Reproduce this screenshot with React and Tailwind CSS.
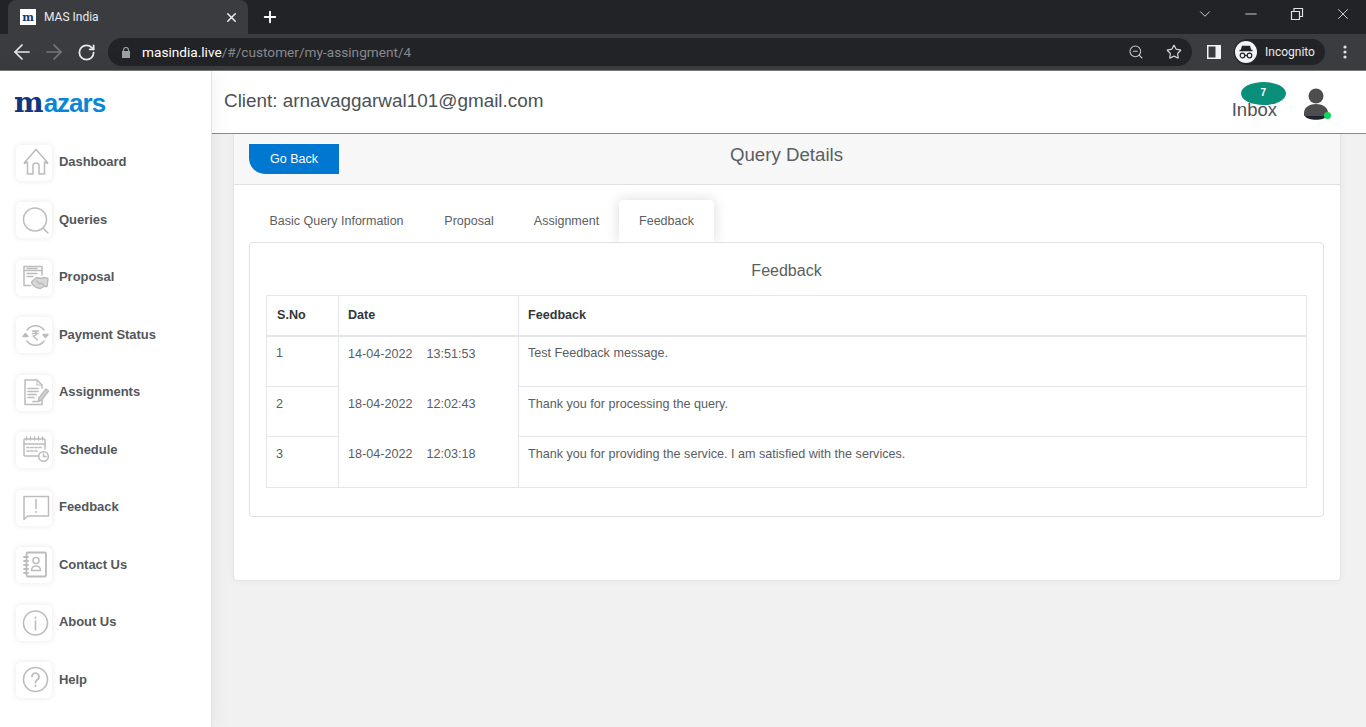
import React from 'react';
import { ArrowLeft, ArrowRight, RotateCw, Star, ZoomOut, X, Plus, ChevronDown, Minus } from 'lucide-react';

const Line = ({ children }) => (
  <svg width="36" height="36" viewBox="0 0 36 36" fill="none" stroke="#bcbcbc" strokeWidth="1.500" strokeLinecap="round" strokeLinejoin="round">
    {children}
  </svg>
);

const navItems = [
  {
    label: 'Dashboard',
    icon: (
      <Line>
        <path d="M8.500 17.500v1l3-1.500v12h5.500v-8a3 3 0 0 1 6 0v8h5.500V17l3 1.500v-1L20 4.500z" />
      </Line>
    ),
  },
  {
    label: 'Queries',
    icon: (
      <Line>
        <circle cx="19" cy="17.500" r="11.500" />
        <path d="M27 26l5 5" />
      </Line>
    ),
  },
  {
    label: 'Proposal',
    icon: (
      <Line>
        <path d="M26 15V6.500H8v19h6.500" />
        <path d="M8 10.500h18" />
        <path d="M11 8.500h10M11 13.500h10M11 16.500h6" />
        <path d="M15.500 22l5-4.500 4.500 1 3-1 4 1-1 8h-3.500l-3 2-4-1-4-3z" fill="#d8d8d8" />
        <path d="M20.500 21l3 3 2-1 3 3" />
      </Line>
    ),
  },
  {
    label: 'Payment Status',
    icon: (
      <Line>
        <path d="M11 13a10.500 10.500 0 0 1 17 0M28 24a10.500 10.500 0 0 1-17 0" />
        <path d="M7 19.500h5l-2.500-3zM27 17.500h5l-2.500 3z" fill="#bcbcbc" />
        <path d="M16.500 14h6M16.500 16.500h6M17 14c4.500 0 4.500 5 0 5l4.500 4" strokeWidth="1.300" />
      </Line>
    ),
  },
  {
    label: 'Assignments',
    icon: (
      <Line>
        <path d="M26 13v-3l-5-5H9v24.500h17V24" />
        <path d="M21 5v5h5" strokeWidth="1.100" />
        <path d="M12 13.500h10M12 16.500h10M12 19.500h8M12 22.500h6M17 26.500h5" strokeWidth="1.700" />
        <path d="M23 23l7-9 2.500 2-7 9-3 1.500z" fill="#d4d4d4" />
      </Line>
    ),
  },
  {
    label: 'Schedule',
    labelClass: 'pl-px',
    icon: (
      <Line>
        <path d="M25 24H9a1 1 0 0 1-1-1V8a1 1 0 0 1 1-1h19a1 1 0 0 1 1 1v9" />
        <path d="M8 12h21M10.500 5v3M14.500 5v3M18.500 5v3M22.500 5v3M26.500 5v3" />
        <path d="M11 15.500h2M15 15.500h2M19 15.500h2M23 15.500h2M11 19h2M15 19h2M19 19h2" strokeWidth="1.700" />
        <circle cx="27.500" cy="24.500" r="4.800" fill="#fff" />
        <path d="M27.500 22v2.500H30" />
      </Line>
    ),
  },
  {
    label: 'Feedback',
    icon: (
      <Line>
        <path d="M8 6.500h24.500V26H11.500L8 29.500z" />
        <path d="M20 9.500v9M20 21.500v1" />
      </Line>
    ),
  },
  {
    label: 'Contact Us',
    icon: (
      <Line>
        <path d="M12 5.500h16.500a1.500 1.500 0 0 1 1.500 1.500v21a1.500 1.500 0 0 1-1.500 1.500H12a1.500 1.500 0 0 1-1.500-1.500V7A1.500 1.500 0 0 1 12 5.500z" strokeWidth="1.800" />
        <path d="M8 10h4M8 14h4M8 18h4M8 22h4M8 26h4" strokeWidth="1.800" />
        <circle cx="20" cy="13.500" r="3" />
        <path d="M15.500 23.500c0-6 9-6 9 0z" />
      </Line>
    ),
  },
  {
    label: 'About Us',
    icon: (
      <Line>
        <circle cx="19.500" cy="18" r="12" strokeWidth="1.600" />
        <path d="M19.500 16v9M19.500 12v1.500" />
      </Line>
    ),
  },
  {
    label: 'Help',
    icon: (
      <Line>
        <circle cx="19.500" cy="17.500" r="12" strokeWidth="1.600" />
        <path d="M16 14.500a3.500 3.500 0 1 1 5.500 3c-1.500 1-2 1.500-2 3" strokeWidth="1.800" />
        <path d="M19.500 23.500v.5" strokeWidth="1.800" />
      </Line>
    ),
  },
];

const feedbackRows = [
  { no: 1, date: '14-04-2022', time: '13:51:53', text: 'Test Feedback message.', h: 'h-[51px]' },
  { no: 2, date: '18-04-2022', time: '12:02:43', text: 'Thank you for processing the query.', h: 'h-[50px]' },
  { no: 3, date: '18-04-2022', time: '12:03:18', text: 'Thank you for providing the service. I am satisfied with the services.', h: 'h-[51px]' },
];

const tabs = [
  { label: 'Basic Query Information', w: 'w-[175px]' },
  { label: 'Proposal', w: 'w-[90px]' },
  { label: 'Assignment', w: 'w-[105px]' },
];

function BrowserBar() {
  return (
    <div className="h-[71px] shrink-0 border-b border-[#77787a] bg-[#3b3c3f] font-['Roboto',sans-serif] text-white">
      <div className="flex h-[34px] items-end bg-[#222327]">
        <div className="ml-2 flex h-[34px] w-[240px] items-center rounded-t-lg bg-[#3b3c3f] pl-3 pr-[9px]">
          <span className="flex h-4 w-4 items-center justify-center bg-white font-['DejaVu_Serif',serif] text-[11px] font-bold leading-none text-[#12357f]">m</span>
          <span className="ml-2 flex-1 text-[12px] text-[#e8eaed]">MAS India</span>
          <X size={15} strokeWidth={2.500} className="text-[#e8eaed]" />
        </div>
        <Plus size={18} strokeWidth={2.500} className="ml-[13px] mb-2" />
        <div className="flex-1" />
        <div className="mb-[8px] flex items-center pr-[14px] text-[#dfe1e5]">
          <ChevronDown size={18} strokeWidth={1.200} className="mb-[3px]" />
          <Minus size={18} strokeWidth={1.200} className="mb-[3px] ml-[28px]" />
          <svg width="14" height="14" viewBox="0 0 14 14" fill="none" stroke="currentColor" strokeWidth="1.200" className="mb-[3px] ml-[30px]">
            <path d="M1.500 4.500h8v8h-8zM4 4.500V1.500h8.500v8H9.500" />
          </svg>
          <X size={18} strokeWidth={1.200} className="mb-[3px] ml-[30px]" />
        </div>
      </div>
      <div className="flex h-9 items-center">
        <ArrowLeft size={24} strokeWidth={1.700} className="ml-[10px] text-[#e8eaed]" />
        <ArrowRight size={24} strokeWidth={1.700} className="ml-2 text-[#75777a]" />
        <RotateCw size={19} strokeWidth={2.200} className="ml-[11px] text-[#e8eaed]" />
        <div className="ml-3 flex h-7 w-[1084px] items-center rounded-full bg-[#222327] pl-[14px] pr-[10px]">
          <svg width="8" height="11" viewBox="0 0 8 11" fill="#9aa0a6">
            <path d="M0 4h8v7H0z" />
            <path d="M1.500 4.500V3a2.500 2.500 0 0 1 5 0v1.500" fill="none" stroke="#9aa0a6" strokeWidth="1.200" />
          </svg>
          <span className="ml-3 flex-1 text-[13.650px]">
            <span className="text-white">masindia.live</span>
            <span className="text-[#85898e]">/#/customer/my-assingment/4</span>
          </span>
          <ZoomOut size={16} strokeWidth={1.600} className="text-[#c4c7c9]" />
          <Star size={16} strokeWidth={1.800} className="ml-[22px] text-[#d3d5d8]" />
        </div>
        <svg width="14" height="14" viewBox="0 0 14 14" className="ml-[15px]">
          <path d="M0 0h14v14H0z" fill="#f1f3f4" />
          <path d="M1.500 1.500h7v11h-7z" fill="#3b3c3f" />
        </svg>
        <div className="ml-[13px] flex h-[26px] w-[91px] items-center rounded-full bg-[#222327] pl-px">
          <svg width="22" height="22" viewBox="0 0 22 22" fill="none">
            <circle cx="11" cy="11" r="11" fill="#f1f3f4" />
            <path d="M7.500 5.500h7l1 3.500h-9zM4.500 9.500h13" stroke="#222327" strokeWidth="1.400" fill="#222327" />
            <circle cx="7.500" cy="14.500" r="2.300" stroke="#222327" strokeWidth="1.200" />
            <circle cx="14.500" cy="14.500" r="2.300" stroke="#222327" strokeWidth="1.200" />
            <path d="M9.800 14.500h2.400" stroke="#222327" strokeWidth="1.200" />
          </svg>
          <span className="ml-2 text-[12px] text-[#e8eaed]">Incognito</span>
        </div>
        <svg width="4" height="14" viewBox="0 0 4 14" className="ml-[18px]" fill="#dfe1e5">
          <circle cx="2" cy="2" r="1.600" />
          <circle cx="2" cy="7" r="1.600" />
          <circle cx="2" cy="12" r="1.600" />
        </svg>
      </div>
    </div>
  );
}

function Sidebar() {
  return (
    <aside className="relative z-10 w-[212px] shrink-0 border-r border-[#e3e3e3] bg-white shadow-[0_0_20px_rgba(0,0,0,0.07)]">
      <div className="flex h-[63px] items-center pl-[14px] font-['Liberation_Sans',sans-serif] text-[26px] font-bold leading-none">
        <span className="font-['DejaVu_Serif',serif] text-[28px] text-[#12357f]">m</span>
        <span className="tracking-[-1px] text-[#0a86d6]">azars</span>
      </div>
      <nav>
        {navItems.map((item) => (
          <div key={item.label} className="flex h-[57.500px] items-center pl-4">
            <span className="flex h-9 w-9 items-center justify-center rounded-[5px] bg-white shadow-[0_0_6px_rgba(0,0,0,0.09)]">
              {item.icon}
            </span>
            <span className={`ml-[7px] mt-[-2px] text-[13px] font-bold tracking-[-0.05px] text-[#53575b] ${item.labelClass || ''}`}>{item.label}</span>
          </div>
        ))}
      </nav>
    </aside>
  );
}

function FeedbackTable() {
  return (
    <table className="w-[1041px] table-fixed border-collapse text-[12.600px] text-[#5a5d61]">
      <colgroup>
        <col className="w-[72px]" />
        <col className="w-[180px]" />
        <col />
      </colgroup>
      <thead>
        <tr className="h-[40px] border-b-2 border-[#e4e6e9] text-left font-bold text-[#33373b]">
          <th className="border border-[#e4e8ee] pl-[10px]">S.No</th>
          <th className="border border-[#e4e8ee] pl-[9px]">Date</th>
          <th className="border border-[#e4e8ee] pl-[9px]">Feedback</th>
        </tr>
      </thead>
      <tbody>
        {feedbackRows.map((row) => (
          <tr key={row.no} className={row.h}>
            <td className="border border-[#e4e8ee] pb-[15px] pl-[9px]">{row.no}</td>
            <td className="border-x border-[#e4e8ee] pb-[15px] pl-[9px]">
              {row.date}
              <span className="ml-[14px]">{row.time}</span>
            </td>
            <td className="border border-[#e4e8ee] pb-[15px] pl-[9px]">{row.text}</td>
          </tr>
        ))}
        <tr className="h-0 border-t border-[#e4e8ee]" />
      </tbody>
    </table>
  );
}

export default function App() {
  return (
    <div className="flex h-screen w-full flex-col overflow-hidden bg-[#f1f1f1] font-['Liberation_Sans',sans-serif]">
      <BrowserBar />
      <div className="flex min-h-0 flex-1">
        <Sidebar />
        <main className="min-w-0 flex-1">
          <header className="flex h-[63px] items-center justify-between border-b border-[#8a8a8a] bg-white pl-3 pr-[38px]">
            <span className="mt-[-1px] text-[18.900px] text-[#4d5156]">Client: arnavaggarwal101@gmail.com</span>
            <div className="flex items-center">
              <div className="relative mt-[15px] text-[18.500px] leading-5 text-[#4d5156]">
                <span className="absolute left-[9px] top-[-18px] flex h-[23px] w-[45px] items-center justify-center rounded-[50%] bg-[#0a8f7b] text-[10px] font-bold text-white">7</span>
                <span className="relative">Inbox</span>
              </div>
              <div className="relative ml-[27px] mt-[5px] h-[33px] w-[24px]">
                <svg width="24" height="33" viewBox="0 0 24 33">
                  <circle cx="12" cy="8" r="7.500" fill="#4d4d4d" />
                  <path d="M0 25c0-12 24-12 24 0v3H0z" fill="#4d4d4d" />
                  <path d="M1 28h22c-2 5-20 5-22 0z" fill="#1f2230" />
                </svg>
                <span className="absolute left-[20px] top-[24px] h-[7px] w-[7px] rounded-full bg-[#12d65e]" />
              </div>
            </div>
          </header>
          <div className="pl-[21px] pr-[25px]">
            <section className="h-[447px] rounded-b-[4px] border-x border-b border-[#e3e3e3] bg-white shadow-[0_0_10px_rgba(0,0,0,0.04)]">
              <div className="flex h-[51px] items-start border-b border-[#e1e1e1] bg-[#f7f7f7] pl-[15px] pt-[10px]">
                <button className="h-[30px] w-[90px] rounded-bl-[16px] bg-[#0078d2] text-[12.500px] text-white">Go Back</button>
                <h2 className="ml-[-90px] flex-1 pr-[16px] pt-px text-center text-[18.700px] leading-5 text-[#5b5e62]">Query Details</h2>
              </div>
              <div className="pl-[15px] pr-4 pt-[15px]">
                <div className="flex h-[42px] text-[12.500px] text-[#5b5e62]">
                  {tabs.map((tab) => (
                    <div key={tab.label} className={`flex items-center justify-center ${tab.w}`}>{tab.label}</div>
                  ))}
                  <div className="relative z-10 flex w-[95px] items-center justify-center rounded-t-[4px] bg-white shadow-[0_0_14px_rgba(0,0,0,0.15)] [clip-path:inset(-20px_-20px_0_-20px)]">Feedback</div>
                </div>
                <div className="h-[275px] rounded-[4px] border border-[#e1e1e1] px-4 pt-[16px]">
                  <h3 className="h-[36px] text-center text-[16px] leading-6 text-[#5b5e62]">Feedback</h3>
                  <FeedbackTable />
                </div>
              </div>
            </section>
          </div>
        </main>
      </div>
    </div>
  );
}
